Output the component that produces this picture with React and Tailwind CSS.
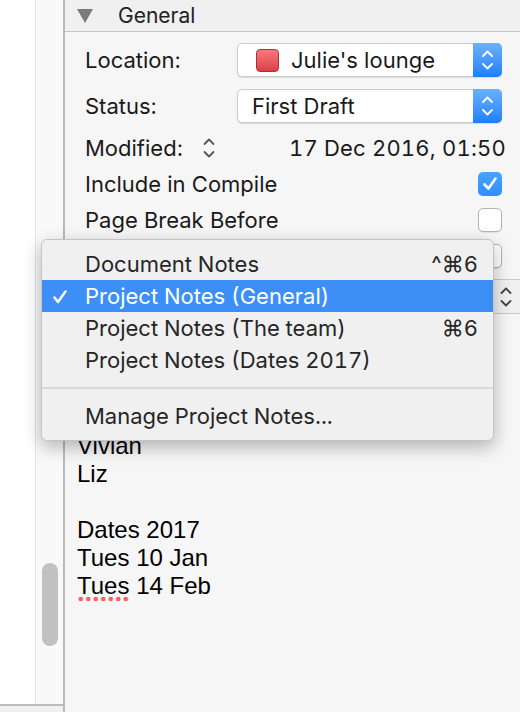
import React from "react";

const ui = { fontFamily: "Inter, 'Liberation Sans', sans-serif" };
const notesFont = { fontFamily: "'Liberation Sans', Arial, sans-serif" };

const Chevrons = ({ color = "#fff", className = "" }) => (
  <svg viewBox="0 0 12 22" className={className} fill="none" stroke={color} strokeWidth="1.8" strokeLinecap="round" strokeLinejoin="round">
    <path d="M1.5 7 L6 2.5 L10.5 7" />
    <path d="M1.5 15 L6 19.5 L10.5 15" />
  </svg>
);

const Popup = ({ children }) => (
  <div className="flex h-[34px] w-[265px] items-stretch rounded-[5px] border border-[#cbcbcb] bg-white shadow-[0_1px_1px_rgba(0,0,0,0.12)]">
    <div className="flex flex-1 items-center overflow-hidden">{children}</div>
    <div className="-my-px -mr-px flex w-[29px] items-center justify-center rounded-r-[5px] bg-gradient-to-b from-[#6bb1fb] to-[#1a7ffa]">
      <Chevrons className="h-[22px] w-[13px]" />
    </div>
  </div>
);

const Checkbox = ({ checked }) =>
  checked ? (
    <div className="flex h-[24px] w-[24px] items-center justify-center rounded-[5px] bg-gradient-to-b from-[#4aa3fd] to-[#2f8ef8]">
      <svg viewBox="0 0 24 24" className="h-[24px] w-[24px]" fill="none" stroke="#fff" strokeWidth="2.6" strokeLinecap="round" strokeLinejoin="round">
        <path d="M6.5 12.5 L10.5 16.5 L17.5 6.5" />
      </svg>
    </div>
  ) : (
    <div className="h-[24px] w-[24px] rounded-[5px] border border-[#b3b3b3] bg-white shadow-[0_1px_1px_rgba(0,0,0,0.08)]" />
  );

const Row = ({ label, children }) => (
  <div className="flex h-[36px] items-center pl-[20px] pr-[18px] text-[22px] text-[#1a1a1a]">
    <span>{label}</span>
    <div className="ml-auto flex items-center">{children}</div>
  </div>
);

const MenuItem = ({ label, shortcut, active }) => (
  <div className={`relative flex h-[32px] items-center pl-[43px] pr-[15px] text-[22px] tabular-nums ${active ? "bg-[#3d8ff6] text-white" : "text-[#262626]"}`}>
    {active && (
      <svg viewBox="0 0 14 14" className="absolute left-[11px] top-[10px] h-[14px] w-[14px]" fill="none" stroke="#fff" strokeWidth="2.4" strokeLinecap="round" strokeLinejoin="round">
        <path d="M1.5 7.5 L5 12 L12.5 1.5" />
      </svg>
    )}
    <span>{label}</span>
    {shortcut && <span className="ml-auto">{shortcut}</span>}
  </div>
);

export default function App() {
  return (
    <div className="relative flex h-[712px] w-[520px] overflow-hidden bg-white" style={ui}>
      {/* binder + scroller */}
      <div className="flex w-[63px] flex-col">
        <div className="flex flex-1">
          <div className="w-[35px] bg-white" />
          <div className="relative flex-1 border-l border-[#e4e4e4] bg-[#f9f9f9]">
            <div className="absolute left-[6px] top-[563px] h-[83px] w-[16px] rounded-full bg-[#c1c1c1]" />
          </div>
        </div>
        <div className="h-[8px] border-t-2 border-[#bdbdbd] bg-[#f0f0f0]" />
      </div>

      {/* inspector */}
      <div className="flex flex-1 flex-col border-l-2 border-[#b9b9b9] bg-[#f6f6f6]">
        <div className="flex h-[32px] items-center border-b border-[#c6c6c6] bg-[#f0f0f0] pl-[12px]">
          <svg viewBox="0 0 16 14" className="h-[14px] w-[16px]">
            <path d="M0 0 H16 L8 14 Z" fill="#7b7b7b" />
          </svg>
          <span className="ml-[25px] text-[21px] text-[#222]">General</span>
        </div>

        <div className="mt-[11px] flex h-[34px] items-center pl-[20px] pr-[18px] text-[22px] text-[#1a1a1a]">
          <span className="w-[152px]">Location:</span>
          <Popup>
            <div className="ml-[18px] h-[23px] w-[23px] rounded-[4px] border border-[#a8323b] bg-gradient-to-b from-[#f7797d] to-[#dc3d46]" />
            <span className="ml-[12px]">Julie's lounge</span>
          </Popup>
        </div>
        <div className="mt-[12px] flex h-[34px] items-center pl-[20px] pr-[18px] text-[22px] text-[#1a1a1a]">
          <span className="w-[152px]">Status:</span>
          <Popup>
            <span className="ml-[14px]">First Draft</span>
          </Popup>
        </div>

        <div className="mt-[7px]">
          <div className="flex h-[36px] items-center pl-[20px] pr-[14px] text-[22px] text-[#1a1a1a]">
            <span>Modified:</span>
            <Chevrons color="#555" className="ml-[20px] h-[22px] w-[12px]" />
            <span className="ml-auto tabular-nums tracking-[0.2px]">17 Dec 2016, 01:50</span>
          </div>
          <Row label="Include in Compile">
            <Checkbox checked />
          </Row>
          <Row label="Page Break Before">
            <Checkbox />
          </Row>
          <Row label="">
            <Checkbox />
          </Row>
        </div>

        <div className="mt-[5px] flex h-[35px] items-center border-y border-[#c8c8c8] bg-[#f0f0f0] pl-[20px] pr-[8px]">
          <Chevrons color="#444" className="ml-auto h-[22px] w-[12px]" />
        </div>

        <div className="pl-[12px] pt-[118px] text-[24px] leading-[28px] text-black" style={notesFont}>
          <div>Vivian</div>
          <div>Liz</div>
          <div className="h-[28px]" />
          <div>Dates 2017</div>
          <div>Tues 10 Jan</div>
          <div>
            <span className="relative">
              Tues
              <span className="absolute left-0 top-[24px] h-[6px] w-[53px] bg-[radial-gradient(circle,#f26060_2px,transparent_2.6px)] bg-[length:7.5px_6px]" />
            </span>{" "}
            14 Feb
          </div>
        </div>
      </div>

      {/* menu */}
      <div className="absolute left-[41px] top-[239px] w-[453px] rounded-[6px] border border-[#c4c4c4] bg-[#f0f0f0] py-[8px] shadow-[0_6px_18px_rgba(0,0,0,0.28)]">
        <MenuItem label="Document Notes" shortcut="^⌘6" />
        <MenuItem label="Project Notes (General)" active />
        <MenuItem label="Project Notes (The team)" shortcut="⌘6" />
        <MenuItem label="Project Notes (Dates 2017)" />
        <div className="my-[11px] h-[2px] bg-[#dadada]" />
        <MenuItem label="Manage Project Notes..." />
      </div>
    </div>
  );
}
